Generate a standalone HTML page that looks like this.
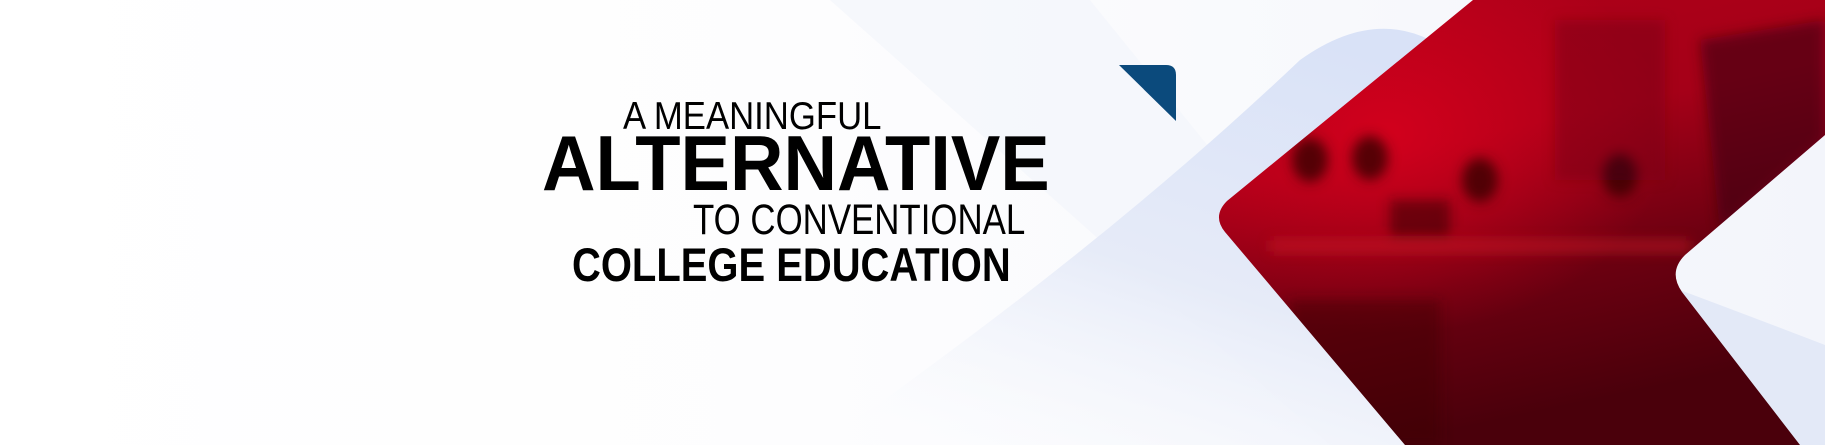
<!DOCTYPE html>
<html><head><meta charset="utf-8"><style>
html,body{margin:0;padding:0;width:1825px;height:445px;overflow:hidden;background:#fff}
svg{display:block;position:absolute;left:0;top:0}
.t{position:absolute;font-family:"Liberation Sans",sans-serif;line-height:1;white-space:nowrap;transform-origin:0 0;color:#000;letter-spacing:0}
</style></head><body>
<svg width="1825" height="445" viewBox="0 0 1825 445" xmlns="http://www.w3.org/2000/svg">
<defs>
<linearGradient id="bg" x1="0" y1="0" x2="1" y2="0">
<stop offset="0" stop-color="#ffffff"/><stop offset="0.45" stop-color="#fdfdfe"/><stop offset="1" stop-color="#f3f5fb"/>
</linearGradient>
<linearGradient id="band" x1="0" y1="1" x2="0.6" y2="0">
<stop offset="0" stop-color="#ffffff" stop-opacity="0.2"/><stop offset="0.5" stop-color="#e6ebf8"/><stop offset="1" stop-color="#d9e2f7"/>
</linearGradient>
<linearGradient id="red" x1="0" y1="0" x2="0.3" y2="1">
<stop offset="0" stop-color="#b00019"/><stop offset="0.4" stop-color="#a50018"/><stop offset="0.7" stop-color="#6e0011"/><stop offset="1" stop-color="#4a000b"/>
</linearGradient>
<radialGradient id="glow" cx="0.3" cy="0.3" r="0.45">
<stop offset="0" stop-color="#e4001e" stop-opacity="0.7"/><stop offset="1" stop-color="#e4001e" stop-opacity="0"/>
</radialGradient>
<filter id="bl"><feGaussianBlur stdDeviation="6"/></filter>
<clipPath id="ph"><path d="M1473 0 L1825 0 L1825 135 L1685 255 Q1668 272 1682 292 L1800 445 L1405 445 L1225 232 Q1212 216 1227 201 Z"/></clipPath>
</defs>
<rect width="1825" height="445" fill="url(#bg)"/>
<path d="M830 0 L1090 0 L1450 445 L1330 445 Z" fill="#f4f6fb" opacity="0.8"/>
<path d="M820 445 Q1100 250 1300 60 Q1370 10 1430 40 L1600 445 Z" fill="url(#band)"/>
<path d="M1680 290 Q1760 320 1825 345 L1825 445 L1800 445 Z" fill="#e3e9f7"/>
<path d="M1119 65 L1166 65 Q1176 65 1176 75 L1176 121 Z" fill="#0b4a7c"/>
<g clip-path="url(#ph)">
<rect x="1200" y="0" width="625" height="445" fill="url(#red)"/>
<rect x="1200" y="0" width="625" height="445" fill="url(#glow)"/>
<g filter="url(#bl)">
<rect x="1555" y="20" width="110" height="160" fill="#7a0014" opacity="0.5"/>
<rect x="1270" y="240" width="420" height="12" fill="#d4202e" opacity="0.5"/>
<ellipse cx="1310" cy="160" rx="18" ry="22" fill="#3a0008" opacity="0.8"/>
<ellipse cx="1370" cy="158" rx="18" ry="22" fill="#3a0008" opacity="0.8"/>
<ellipse cx="1480" cy="180" rx="18" ry="22" fill="#3a0008" opacity="0.8"/>
<ellipse cx="1620" cy="175" rx="18" ry="22" fill="#3a0008" opacity="0.8"/>
<path d="M1700 40 L1825 20 L1825 140 L1720 230 Z" fill="#3a0a14" opacity="0.6"/>
<rect x="1390" y="200" width="60" height="40" fill="#2a0008" opacity="0.5"/>
<rect x="1290" y="300" width="150" height="145" fill="#3a0008" opacity="0.4"/>
</g>
</g>
</svg>
<div class="t" style="left:623px;top:97px;font-size:39px;transform:scaleX(0.89)">A MEANINGFUL</div>
<div class="t" style="left:542px;top:124px;font-size:78px;font-weight:bold;transform:scaleX(0.95)">ALTERNATIVE</div>
<div class="t" style="left:693px;top:199px;font-size:43px;transform:scaleX(0.81)">TO CONVENTIONAL</div>
<div class="t" style="left:572px;top:241px;font-size:47px;font-weight:bold;transform:scaleX(0.85)">COLLEGE EDUCATION</div>
</body></html>
